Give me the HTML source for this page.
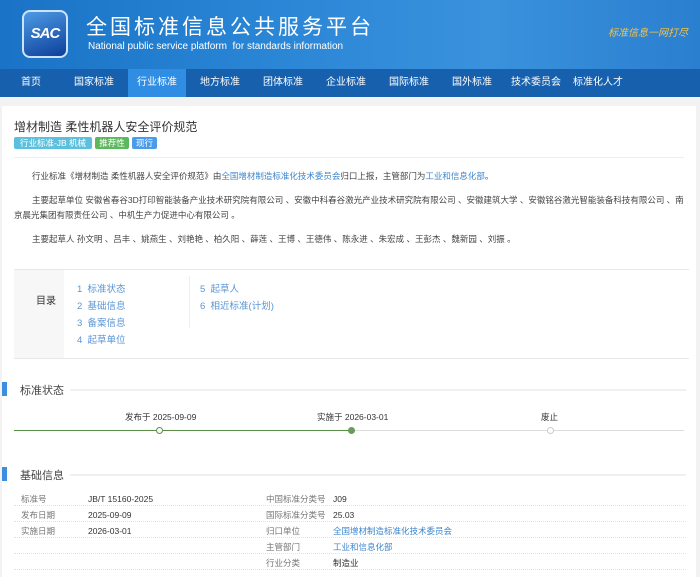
<!DOCTYPE html>
<html><head><meta charset="utf-8"><style>
*{margin:0;padding:0;box-sizing:border-box}
body{width:700px;height:577px;overflow:hidden;background:#f2f2f2;font-family:"Liberation Sans","Noto Sans CJK SC",sans-serif;font-size:9px;color:#333;position:relative}
.hdr{position:absolute;left:0;top:0;width:700px;height:69px;background:linear-gradient(90deg,#1a73c6 0%,#2b86d6 40%,#3a92dc 70%,#2a7fcf 100%)}
.logo{position:absolute;left:22px;top:10px;width:46px;height:48px;border-radius:8px;background:linear-gradient(160deg,#4d9be6,#0d3f9a);border:2px solid #cfe3f7;color:#fff;font-style:italic;font-weight:bold;font-size:15px;line-height:44px;text-align:center;letter-spacing:-1px}
.t1{position:absolute;left:86px;top:11px;color:#fff;font-size:21px;letter-spacing:3px}
.t2{position:absolute;left:88px;top:41px;color:#fff;font-size:10px}
.slog{position:absolute;left:608px;top:24px;color:#f4c24a;font-size:10px;font-style:italic}
.nav{position:absolute;left:0;top:69px;width:700px;height:28px;background:#1660ad}
.nav span{position:absolute;top:0;line-height:28px;color:#fff;font-size:10px}
.nav .act{background:#2f8ee3;width:58px;text-align:center}
.panel{position:absolute;left:2px;top:106px;width:694px;height:471px;background:#fff}
.h1{position:absolute;left:14px;top:118px;font-size:12px;color:#333}
.tag{position:absolute;top:137px;height:12px;line-height:12px;font-size:8.5px;color:#fff;text-align:center;border-radius:2px}
.hr{position:absolute;left:14px;top:157px;width:670px;height:1px;background:#eee}
.p{position:absolute;left:14px;font-size:8.5px;color:#444;line-height:15px;width:672px}
a{color:#3c86cc;text-decoration:none}
.toc{position:absolute;left:14px;top:269px;width:675px;height:90px;border-top:1px solid #e8e8e8;border-bottom:1px solid #e8e8e8}
.toc .l{position:absolute;left:0;top:0;width:50px;height:88px;background:#f7f7f7;font-size:10px;font-weight:normal;text-align:right;padding:22px 8px 0 0}
.toc .i{position:absolute;font-size:9.5px;color:#5a95d6}
.sec{position:absolute;left:2px;width:5px;height:14px;background:#3d8de0}
.st{position:absolute;left:20px;font-size:11px;color:#444}
.sl{position:absolute;left:70px;width:616px;height:2px;background:#f0f0f0}
.row{position:absolute;left:14px;width:672px;border-bottom:1px dotted #e2e2e2;height:16px}
.c{position:absolute;font-size:8.5px;line-height:15px}
.k{color:#777}
</style></head><body>
<div class="hdr">
<div class="logo">SAC</div>
<div class="t1">全国标准信息公共服务平台</div>
<div class="t2">National public service platform&nbsp; for standards information</div>
<div class="slog">标准信息一网打尽</div>
</div>
<div class="nav">
<span style="left:21px">首页</span>
<span style="left:74px">国家标准</span>
<span class="act" style="left:128px">行业标准</span>
<span style="left:200px">地方标准</span>
<span style="left:263px">团体标准</span>
<span style="left:326px">企业标准</span>
<span style="left:389px">国际标准</span>
<span style="left:452px">国外标准</span>
<span style="left:511px">技术委员会</span>
<span style="left:573px">标准化人才</span>
</div>
<div class="panel"></div>
<div class="h1">增材制造 柔性机器人安全评价规范</div>
<div class="tag" style="left:14px;width:78px;background:#5bc0de">行业标准-JB 机械</div>
<div class="tag" style="left:95px;width:34px;background:#5cb85c">推荐性</div>
<div class="tag" style="left:132px;width:25px;background:#4a9bea">现行</div>
<div class="hr"></div>
<div class="p" style="top:169px;text-indent:18px">行业标准《增材制造 柔性机器人安全评价规范》由<a>全国增材制造标准化技术委员会</a>归口上报，主管部门为<a>工业和信息化部</a>。</div>
<div class="p" style="top:193px;text-indent:18px">主要起草单位 安徽省春谷3D打印智能装备产业技术研究院有限公司 、安徽中科春谷激光产业技术研究院有限公司 、安徽建筑大学 、安徽铭谷激光智能装备科技有限公司 、南京晨光集团有限责任公司 、中机生产力促进中心有限公司 。</div>
<div class="p" style="top:232px;text-indent:18px">主要起草人 孙文明 、吕丰 、姚燕生 、刘艳艳 、柏久阳 、薛莲 、王博 、王德伟 、陈永进 、朱宏成 、王彭杰 、魏新园 、刘振 。</div>
<div class="toc">
<div class="l">目录</div>
<div class="i" style="left:63px;top:11px">1&nbsp; 标准状态</div>
<div class="i" style="left:63px;top:28px">2&nbsp; 基础信息</div>
<div class="i" style="left:63px;top:45px">3&nbsp; 备案信息</div>
<div class="i" style="left:63px;top:62px">4&nbsp; 起草单位</div>
<div style="position:absolute;left:175px;top:6px;width:1px;height:52px;background:#eee"></div>
<div class="i" style="left:186px;top:11px">5&nbsp; 起草人</div>
<div class="i" style="left:186px;top:28px">6&nbsp; 相近标准(计划)</div>
</div>
<div class="sec" style="top:382px"></div><div class="st" style="top:382px">标准状态</div><div class="sl" style="top:389px"></div>
<div class="c" style="left:125px;top:410px">发布于 2025-09-09</div>
<div class="c" style="left:317px;top:410px">实施于 2026-03-01</div>
<div class="c" style="left:541px;top:410px">废止</div>
<div style="position:absolute;left:14px;top:430px;width:670px;height:1px;background:#ddd"></div>
<div style="position:absolute;left:14px;top:430px;width:338px;height:1px;background:#5a8f4a"></div>
<div style="position:absolute;left:156px;top:427px;width:7px;height:7px;border-radius:50%;background:#fff;border:1px solid #5a8f4a"></div>
<div style="position:absolute;left:348px;top:427px;width:7px;height:7px;border-radius:50%;background:#6a9a5e"></div>
<div style="position:absolute;left:547px;top:427px;width:7px;height:7px;border-radius:50%;background:#fff;border:1px solid #ccc"></div>
<div class="sec" style="top:467px"></div><div class="st" style="top:467px">基础信息</div><div class="sl" style="top:474px"></div>
<div class="row" style="top:490px"></div><div class="row" style="top:506px"></div><div class="row" style="top:522px"></div><div class="row" style="top:538px"></div><div class="row" style="top:554px"></div>
<div class="c k" style="left:21px;top:492px">标准号</div><div class="c" style="left:88px;top:492px">JB/T 15160-2025</div>
<div class="c k" style="left:21px;top:508px">发布日期</div><div class="c" style="left:88px;top:508px">2025-09-09</div>
<div class="c k" style="left:21px;top:524px">实施日期</div><div class="c" style="left:88px;top:524px">2026-03-01</div>
<div class="c k" style="left:266px;top:492px">中国标准分类号</div><div class="c" style="left:333px;top:492px">J09</div>
<div class="c k" style="left:266px;top:508px">国际标准分类号</div><div class="c" style="left:333px;top:508px">25.03</div>
<div class="c k" style="left:266px;top:524px">归口单位</div><div class="c" style="left:333px;top:524px"><a>全国增材制造标准化技术委员会</a></div>
<div class="c k" style="left:266px;top:540px">主管部门</div><div class="c" style="left:333px;top:540px"><a>工业和信息化部</a></div>
<div class="c k" style="left:266px;top:556px">行业分类</div><div class="c" style="left:333px;top:556px">制造业</div>
</body></html>
